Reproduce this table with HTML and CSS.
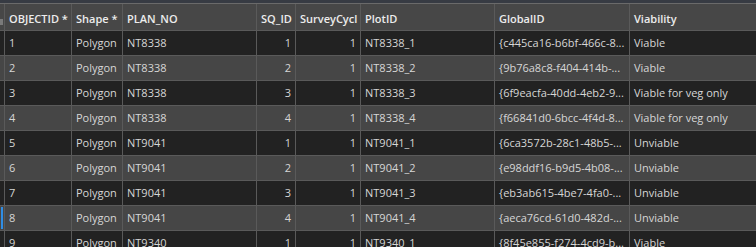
FILE: index.html
```html
<!DOCTYPE html>
<html lang="en">
<head>
<meta charset="utf-8">
<title>Attribute table</title>
<link rel="stylesheet" href="styles.css">
</head>
<body>
<div class="topbar"></div>
<div class="grid">
  <div class="hd rh"><span class="corner"></span></div>
  <div class="hd">OBJECTID *</div>
  <div class="hd">Shape *</div>
  <div class="hd">PLAN_NO</div>
  <div class="hd">SQ_ID</div>
  <div class="hd">SurveyCycl</div>
  <div class="hd">PlotID</div>
  <div class="hd">GlobalID</div>
  <div class="hd">Viability</div>

  <div class="c rh odd"></div><div class="c odd">1</div><div class="c odd">Polygon</div><div class="c odd">NT8338</div><div class="c odd num">1</div><div class="c odd num">1</div><div class="c odd">NT8338_1</div><div class="c odd">{c445ca16-b6bf-466c-8...</div><div class="c odd">Viable</div>

  <div class="c rh even"></div><div class="c even">2</div><div class="c even">Polygon</div><div class="c even">NT8338</div><div class="c even num">2</div><div class="c even num">1</div><div class="c even">NT8338_2</div><div class="c even">{9b76a8c8-f404-414b-...</div><div class="c even">Viable</div>

  <div class="c rh odd"></div><div class="c odd">3</div><div class="c odd">Polygon</div><div class="c odd">NT8338</div><div class="c odd num">3</div><div class="c odd num">1</div><div class="c odd">NT8338_3</div><div class="c odd">{6f9eacfa-40dd-4eb2-9...</div><div class="c odd">Viable for veg only</div>

  <div class="c rh even"></div><div class="c even">4</div><div class="c even">Polygon</div><div class="c even">NT8338</div><div class="c even num">4</div><div class="c even num">1</div><div class="c even">NT8338_4</div><div class="c even">{f66841d0-6bcc-4f4d-8...</div><div class="c even">Viable for veg only</div>

  <div class="c rh odd"></div><div class="c odd">5</div><div class="c odd">Polygon</div><div class="c odd">NT9041</div><div class="c odd num">1</div><div class="c odd num">1</div><div class="c odd">NT9041_1</div><div class="c odd">{6ca3572b-28c1-48b5-...</div><div class="c odd">Unviable</div>

  <div class="c rh even"></div><div class="c even">6</div><div class="c even">Polygon</div><div class="c even">NT9041</div><div class="c even num">2</div><div class="c even num">1</div><div class="c even">NT9041_2</div><div class="c even">{e98ddf16-b9d5-4b08-...</div><div class="c even">Unviable</div>

  <div class="c rh odd"></div><div class="c odd">7</div><div class="c odd">Polygon</div><div class="c odd">NT9041</div><div class="c odd num">3</div><div class="c odd num">1</div><div class="c odd">NT9041_3</div><div class="c odd">{eb3ab615-4be7-4fa0-...</div><div class="c odd">Unviable</div>

  <div class="c rh even sel"><span class="selbar"></span></div><div class="c even">8</div><div class="c even">Polygon</div><div class="c even">NT9041</div><div class="c even num">4</div><div class="c even num">1</div><div class="c even">NT9041_4</div><div class="c even">{aeca76cd-61d0-482d-...</div><div class="c even">Unviable</div>

  <div class="c rh odd"></div><div class="c odd">9</div><div class="c odd">Polygon</div><div class="c odd">NT9340</div><div class="c odd num">1</div><div class="c odd num">1</div><div class="c odd">NT9340_1</div><div class="c odd">{8f45e855-f274-4cd9-b...</div><div class="c odd">Viable</div>
</div>
</body>
</html>
```

FILE: styles.css
```css
html, body {
  margin: 0;
  padding: 0;
  width: 756px;
  height: 247px;
  overflow: hidden;
  background: #222222;
}

body {
  font-family: "Open Sans", "Noto Sans", sans-serif;
  font-size: 11px;
  color: #d6d6d6;
}

.topbar {
  height: 3px;
  background: #373b43;
  border-bottom: 1px solid #6a6a6a;
}

.grid {
  display: grid;
  grid-template-columns: 4px 66px 50px 133px 38px 64px 133px 134px 1fr;
  grid-template-rows: 26px;
  grid-auto-rows: 24px;
  gap: 1px;
  background: #5a5a5a;
}

.hd {
  background: #474747;
  color: #ececec;
  font-weight: 600;
  display: flex;
  align-items: center;
  padding: 2px 4px 0 4px;
  white-space: nowrap;
  overflow: hidden;
}

.c {
  display: flex;
  align-items: center;
  padding: 0 4px 2px 4px;
  white-space: nowrap;
  overflow: hidden;
}

.odd { background: #222222; }
.even { background: #464646; }

.num { justify-content: flex-end; }

.rh {
  padding: 0;
  position: relative;
}

.corner {
  position: absolute;
  left: 0;
  top: 15px;
  width: 3px;
  height: 6px;
  background: #7a7a7a;
}

.selbar {
  position: absolute;
  left: 1px;
  top: 1px;
  bottom: 1px;
  width: 2px;
  background: #2f8de4;
}
```
